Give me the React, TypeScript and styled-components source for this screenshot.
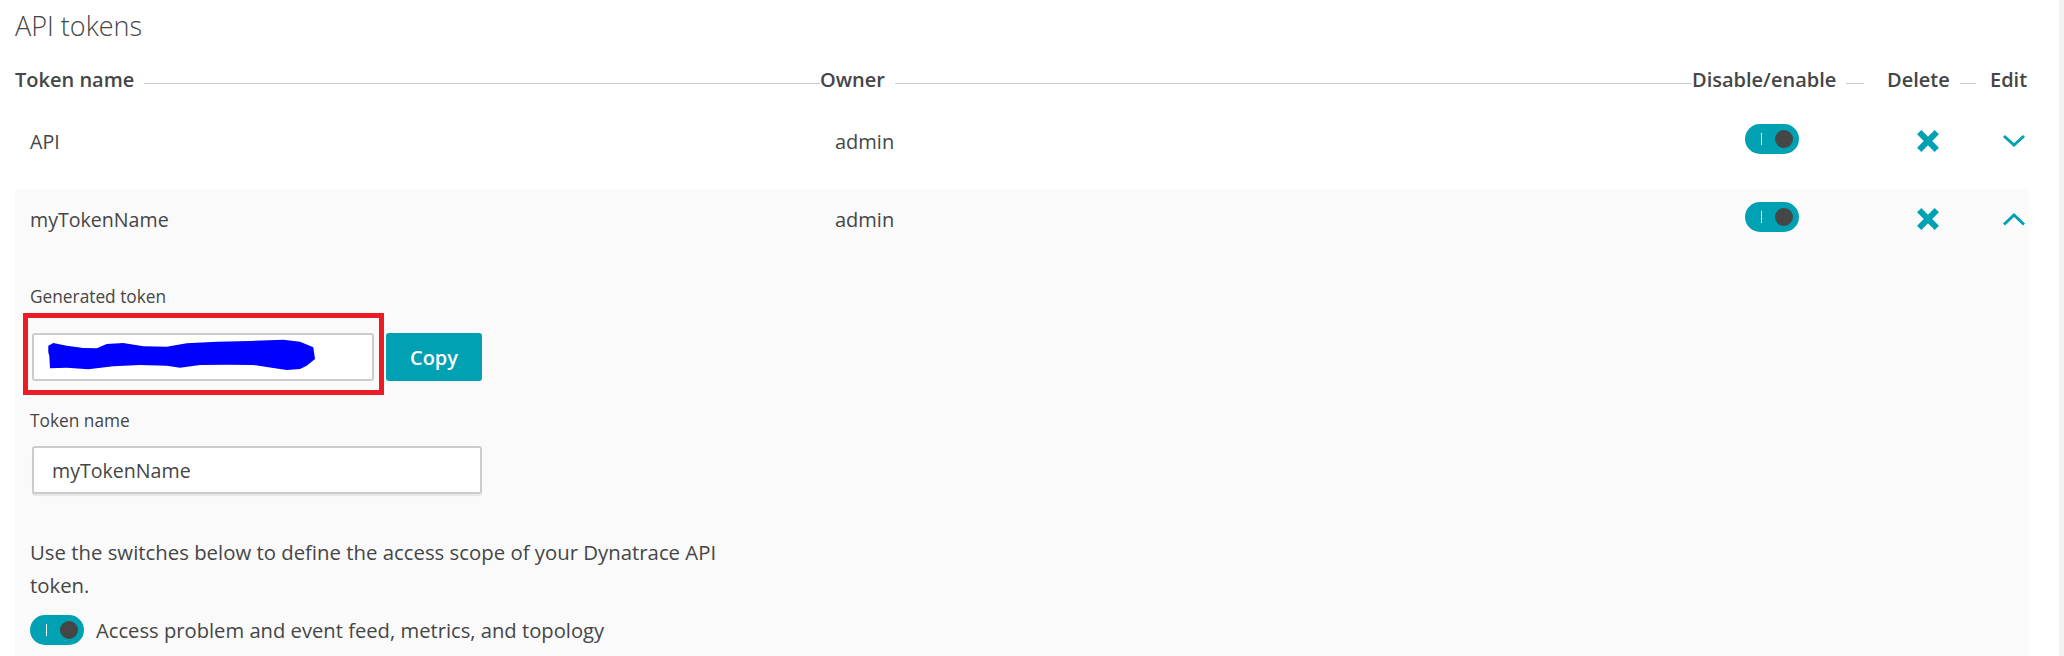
import React from "react";
import styled, {createGlobalStyle} from "styled-components";

const TEAL = "#00a1b2";
const TEXT = "#454646";

const tokens = [
    {name: "API", owner: "admin", open: false},
    {name: "myTokenName", owner: "admin", open: true},
];

function Toggle({lifted}: {lifted?: boolean}) {
    return (
        <ToggleTrack $lifted={lifted}>
            <ToggleMark/>
            <ToggleKnob/>
        </ToggleTrack>
    );
}

function DeleteIcon() {
    return (
        <IconSvg width={24} height={24} viewBox="0 0 24 24">
            <path d="M3.2 3.2 L20.8 20.8 M20.8 3.2 L3.2 20.8" stroke={TEAL} strokeWidth={6} fill="none"/>
        </IconSvg>
    );
}

function Chevron({up}: {up: boolean}) {
    return (
        <IconSvg width={24} height={14} viewBox="0 0 24 14">
            <path
                d={up ? "M2 12.5 L12 3 L22 12.5" : "M2 2 L12 11 L22 2"}
                stroke={TEAL}
                strokeWidth={3}
                fill="none"
            />
        </IconSvg>
    );
}

function TokenRow({name, owner, open}: {name: string; owner: string; open: boolean}) {
    return (
        <Row $open={open}>
            <NameCell>{name}</NameCell>
            <OwnerCell>{owner}</OwnerCell>
            <ToggleCell><Toggle lifted/></ToggleCell>
            <DeleteCell><DeleteIcon/></DeleteCell>
            <EditCell><Chevron up={open}/></EditCell>
        </Row>
    );
}

export default function App() {
    return (
        <Page>
            <GlobalStyle/>
            <Main>
                <Title>API tokens</Title>
                <HeaderRow>
                    <HeaderCell $width={805}><span>Token name</span><HeaderLine $gap={0}/></HeaderCell>
                    <HeaderCell $width={872}><span>Owner</span><HeaderLine $gap={0}/></HeaderCell>
                    <HeaderCell $width={195}><span>Disable/enable</span><HeaderLine $gap={23}/></HeaderCell>
                    <HeaderCell $width={103}><span>Delete</span><HeaderLine $gap={14}/></HeaderCell>
                    <HeaderCell $width={39}><span>Edit</span></HeaderCell>
                </HeaderRow>
                <TokenRow {...tokens[0]}/>
                <Expanded>
                    <TokenRow {...tokens[1]}/>
                    <Details>
                        <FieldLabel>Generated token</FieldLabel>
                        <TokenLine>
                            <Annotation/>
                            <Input $width={342}>
                                <Scribble width={270} height={34} viewBox="0 0 270 34">
                                    <path
                                        fill="#0000ff"
                                        d="M0.3 6.7 L5.3 4 L18.7 6.7 L35.3 9 L48.7 9.3 L58.7 5 L75.3 4 L95.3 7.3 L118.7 7.7 L138.7 4.3 L168.7 2.7 L202 2 L235.3 0.7 L252 2.7 L265.3 8.3 L267 20 L258.7 26.7 L252 30 L238.7 31 L225.3 29 L205.3 26 L178.7 25.7 L152 26 L132 28.7 L118.7 26.7 L92 26 L65.3 27.3 L40.3 30.3 L18.7 28.7 L2 29.3 L1.3 16.7 L0.3 13.3 Z"
                                    />
                                </Scribble>
                            </Input>
                            <CopyButton>Copy</CopyButton>
                        </TokenLine>
                        <SecondLabel>Token name</SecondLabel>
                        <Input $width={450} $raised>myTokenName</Input>
                        <Hint>Use the switches below to define the access scope of your Dynatrace API token.</Hint>
                        <ScopeRow>
                            <Toggle/>
                            <span>Access problem and event feed, metrics, and topology</span>
                        </ScopeRow>
                    </Details>
                </Expanded>
            </Main>
            <ScrollGutter/>
        </Page>
    );
}

/**
 * Styled Components
 */
const GlobalStyle = createGlobalStyle`
    html, body {
        margin: 0;
        height: 656px;
        overflow: hidden;
        background: #ffffff;
        color: ${TEXT};
        font-family: "Open Sans", "Noto Sans", sans-serif;
    }
`;

const Page = styled("div")`
    display: flex;
    width: 2064px;
    height: 656px;
    overflow: hidden;
`;

const Main = styled("div")`
    width: 2014px;
    margin-left: 15px;
    margin-right: 30px;
`;

const ScrollGutter = styled("div")`
    width: 5px;
    flex-shrink: 0;
    background: #f2f2f2;
`;

const Title = styled("h1")`
    margin: 0;
    height: 66px;
    font-size: 27px;
    line-height: 52px;
    font-weight: 300;
`;

const HeaderRow = styled("div")`
    display: flex;
    height: 27px;
    font-size: 20px;
    font-weight: 600;
    line-height: 27px;
`;

const HeaderCell = styled("div")<{ $width: number }>`
    display: flex;
    width: ${props => props.$width}px;
    white-space: nowrap;
`;

const HeaderLine = styled("div")<{ $gap: number }>`
    flex: 1;
    height: 1px;
    margin: 17px ${props => props.$gap}px 0 10px;
    background: #cccccc;
`;

const Row = styled("div")<{ $open: boolean }>`
    display: flex;
    align-items: center;
    height: ${props => (props.$open ? 60 : 96)}px;
    font-size: 19.6px;
`;

const NameCell = styled("div")`
    width: 805px;
    padding-left: 15px;
    box-sizing: border-box;
`;

const OwnerCell = styled("div")`
    width: 872px;
    padding-left: 15px;
    box-sizing: border-box;
    font-size: 20px;
`;

const ToggleCell = styled("div")`
    display: flex;
    width: 195px;
    padding-left: 53px;
    box-sizing: border-box;
`;

const DeleteCell = styled("div")`
    display: flex;
    width: 103px;
    padding-left: 29px;
    box-sizing: border-box;
`;

const EditCell = styled("div")`
    display: flex;
    width: 39px;
    padding-left: 12px;
    box-sizing: border-box;
`;

const IconSvg = styled("svg")`
    display: block;
    flex-shrink: 0;
`;

const ToggleTrack = styled("div")<{ $lifted?: boolean }>`
    display: flex;
    align-items: center;
    flex-shrink: 0;
    width: 54px;
    height: 30px;
    margin-bottom: ${props => (props.$lifted ? "4px" : "0")};
    border-radius: 15px;
    background: ${TEAL};
`;

const ToggleMark = styled("div")`
    width: 1px;
    height: 12px;
    margin-left: 16px;
    background: #ffffff;
`;

const ToggleKnob = styled("div")`
    width: 18px;
    height: 18px;
    margin-left: 13px;
    border-radius: 50%;
    background: ${TEXT};
`;

const Expanded = styled("div")`
    height: 467px;
    background: #fafafa;
`;

const Details = styled("div")`
    padding: 38px 0 0 15px;
`;

const FieldLabel = styled("div")`
    height: 20px;
    font-size: 17.3px;
    line-height: 20px;
`;

const SecondLabel = styled(FieldLabel)`
    margin-top: 30px;
`;

const TokenLine = styled("div")`
    position: relative;
    display: flex;
    gap: 12px;
    margin-top: 26px;
    margin-left: 2px;
`;

const Annotation = styled("div")`
    position: absolute;
    left: -9px;
    top: -20px;
    width: 361px;
    height: 82px;
    box-sizing: border-box;
    border: 5px solid #ed1c24;
`;

const Input = styled("div")<{ $width: number; $raised?: boolean }>`
    position: relative;
    display: flex;
    align-items: center;
    width: ${props => props.$width}px;
    height: 48px;
    box-sizing: border-box;
    margin-left: ${props => (props.$raised ? "2px" : "0")};
    margin-top: ${props => (props.$raised ? "15px" : "0")};
    padding-left: 18px;
    font-size: 19.6px;
    background: #ffffff;
    border: 2px solid #cccccc;
    border-radius: 3px;
    box-shadow: ${props => (props.$raised ? "0 2px 1px #e6e6e6" : "none")};
`;

const Scribble = styled("svg")`
    position: absolute;
    left: 14px;
    top: 4px;
`;

const CopyButton = styled("div")`
    display: flex;
    align-items: center;
    justify-content: center;
    width: 96px;
    height: 48px;
    border-radius: 3px;
    background: ${TEAL};
    color: #ffffff;
    font-size: 20px;
    font-weight: 600;
`;

const Hint = styled("p")`
    width: 730px;
    margin: 42px 0 0;
    font-size: 20.35px;
    line-height: 33px;
`;

const ScopeRow = styled("div")`
    display: flex;
    align-items: center;
    gap: 12px;
    margin-top: 13px;
    font-size: 20.2px;
`;
